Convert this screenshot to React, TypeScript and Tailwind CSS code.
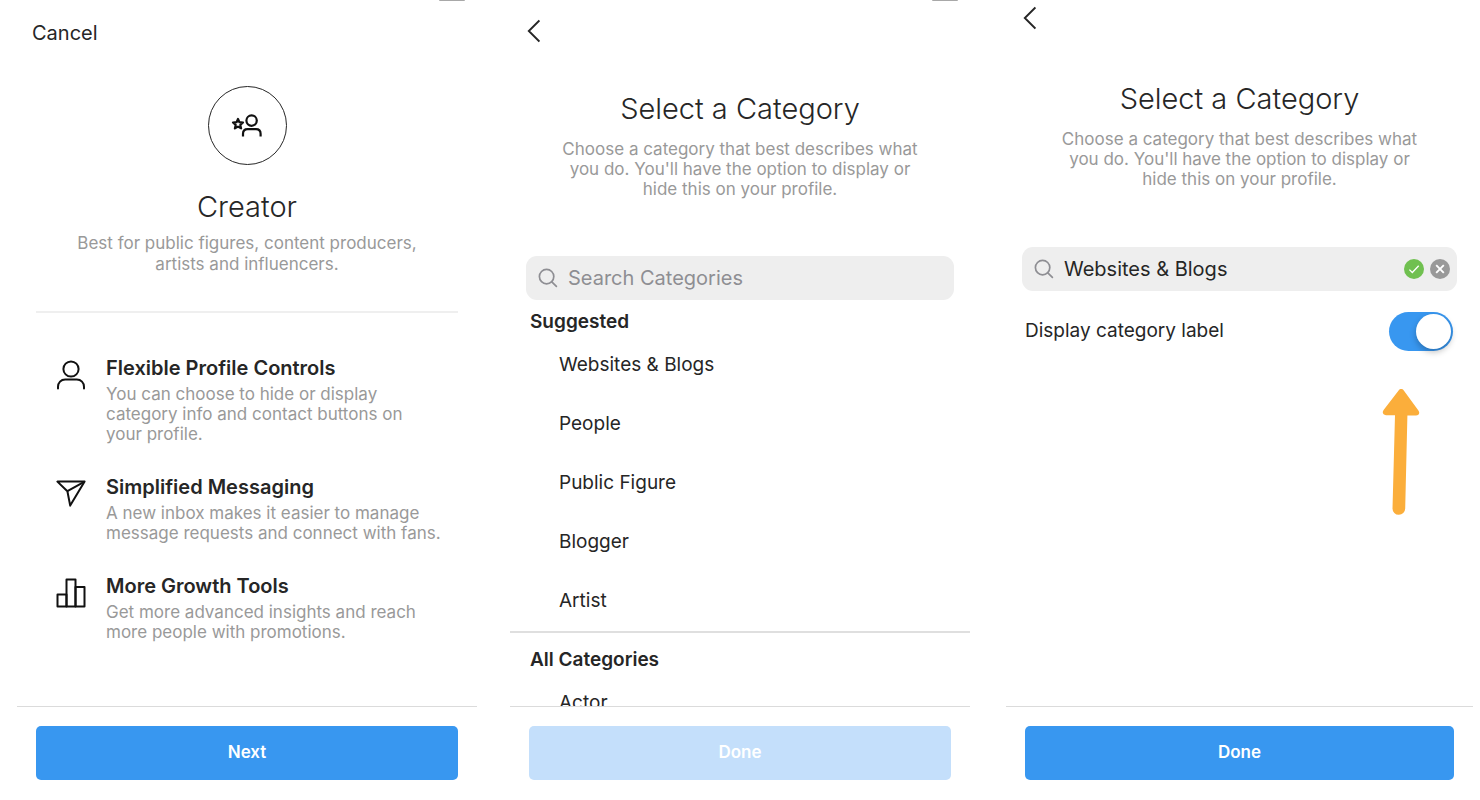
import { ReactNode, useState } from 'react';

const suggested = ['Websites & Blogs', 'People', 'Public Figure', 'Blogger', 'Artist'];
const allCategories = ['Actor'];

function UserIcon() {
  return (
    <svg width="30" height="30" viewBox="0 0 30 30" fill="none" stroke="#111" strokeWidth="2" strokeLinecap="round" aria-hidden="true">
      <circle cx="15" cy="9" r="7.6" />
      <path d="M2 28.6v-1.8C2 22.6 5 19.6 9.2 19.6h11.6c4.2 0 7.2 3 7.2 7.2v1.8" />
    </svg>
  );
}

function SendIcon() {
  return (
    <svg width="30" height="30" viewBox="0 0 30 30" fill="none" stroke="#111" strokeWidth="2" strokeLinejoin="round" aria-hidden="true">
      <path d="M1.4 2.6h27.2L14.2 26.6 11.4 12.2Z" />
      <path d="M11.4 12.2 28.6 2.6" />
    </svg>
  );
}

function ChartIcon() {
  return (
    <svg width="30" height="30" viewBox="0 0 30 30" fill="none" stroke="#111" strokeWidth="2" strokeLinejoin="round" aria-hidden="true">
      <path d="M1.5 16.4h9v12.1h-9z" />
      <path d="M10.5 1.5h9v27h-9z" />
      <path d="M19.5 9h9v19.5h-9z" />
    </svg>
  );
}

function CreatorIcon() {
  return (
    <svg width="32" height="24" viewBox="0 0 32 24" fill="none" stroke="#111" strokeWidth="2.2" aria-hidden="true">
      <path d="M7 5l1.4 3.2 3.6.3-2.7 2.4.8 3.5L7 12.6l-3.1 1.8.8-3.5L2 8.500l3.600-.3z" strokeLinejoin="round" />
      <circle cx="20.6" cy="6.6" r="5.2" />
      <path d="M12 22.4v-2.6c0-2.8 1.8-4.6 4.6-4.6H25c2.8 0 4.6 1.8 4.6 4.6v2.6" />
    </svg>
  );
}

function SearchIcon() {
  return (
    <svg width="20" height="20" viewBox="0 0 20 20" fill="none" stroke="#8e8e93" strokeWidth="1.7" strokeLinecap="round" className="shrink-0" aria-hidden="true">
      <circle cx="8.6" cy="8.6" r="7.2" />
      <path d="m13.8 13.8 4.6 4.6" />
    </svg>
  );
}

function BackButton() {
  return (
    <button type="button" aria-label="Go back" className="block">
      <svg width="14" height="24" viewBox="0 0 14 24" fill="none" stroke="#262626" strokeWidth="1.9" aria-hidden="true">
        <path d="M13.4 1.4 2.8 12l10.6 10.6" />
      </svg>
    </button>
  );
}

// Lower edge of the battery that peeks out of the status bar
function StatusBar() {
  return <div className="h-px w-[26px] mr-3 self-end shrink-0 rounded-b-sm bg-[#a8a8a8]" />;
}

function Footer({ label, disabled = false }: { label: string; disabled?: boolean }) {
  return (
    <footer className="shrink-0 border-t border-[#dbdbdb] px-[19px] pt-[19px] pb-5">
      <button
        type="button"
        disabled={disabled}
        className="w-full h-[54px] rounded-[5px] bg-[#3897f0] text-[17px] font-semibold text-white disabled:bg-[#c4dffb]">
        {label}
      </button>
    </footer>
  );
}

function CategoryIntro() {
  return (
    <div className="text-center">
      <h1 className="text-[29px] leading-10 font-light">Select a Category</h1>
      <p className="mt-[10px] mx-auto max-w-[376px] text-[17px] leading-5 text-[#999]">
        Choose a category that best describes what you do. You'll have the option to display or hide this on your profile.
      </p>
    </div>
  );
}

function Feature({ icon, title, children }: { icon: ReactNode; title: string; children: ReactNode }) {
  return (
    <li className="flex gap-5">
      <div className="w-[30px] shrink-0 pt-[6px]">{icon}</div>
      <div>
        <h2 className="text-xl leading-7 font-semibold">{title}</h2>
        <p className="mt-[2px] text-[17px] leading-5 text-[#999]">{children}</p>
      </div>
    </li>
  );
}

function CategoryList({ items }: { items: string[] }) {
  return (
    <ul className="pl-[49px]">
      {items.map((item) => (
        <li key={item}>
          <button type="button" className="w-full h-[59px] text-left text-[19px]">
            {item}
          </button>
        </li>
      ))}
    </ul>
  );
}

function CreatorScreen() {
  return (
    <section className="flex flex-col min-w-0 flex-[460]">
      <StatusBar />
      <div className="flex-1 px-[19px] pt-[18px]">
        <button type="button" className="block -ml-1 text-xl leading-7">
          Cancel
        </button>
        <div className="mt-[39px] mx-auto size-[79px] flex items-center justify-center rounded-full border border-[#262626]">
          <CreatorIcon />
        </div>
        <div className="mt-[22px] text-center">
          <h1 className="text-[29px] leading-10 font-light">Creator</h1>
          <p className="mt-[6px] mx-auto max-w-[376px] text-[17px] leading-[21px] text-[#999]">
            Best for public figures, content producers, artists and influencers.
          </p>
        </div>
        <hr className="mt-9 border-t-2 border-[#efefef]" />
        <ul className="mt-[41px] pl-5 pr-[17px] flex flex-col gap-[29px]">
          <Feature icon={<UserIcon />} title="Flexible Profile Controls">
            You can choose to hide or display category info and contact buttons on your profile.
          </Feature>
          <Feature icon={<SendIcon />} title="Simplified Messaging">
            A new inbox makes it easier to manage message requests and connect with fans.
          </Feature>
          <Feature icon={<ChartIcon />} title="More Growth Tools">
            Get more advanced insights and reach more people with promotions.
          </Feature>
        </ul>
      </div>
      <Footer label="Next" />
    </section>
  );
}

function CategoryListScreen() {
  return (
    <section className="flex flex-col min-w-0 flex-[460] ml-[33px]">
      <StatusBar />
      <div className="shrink-0 px-4 pt-[18px]">
        <BackButton />
        <div className="mt-[46px]">
          <CategoryIntro />
        </div>
        <label className="mt-[57px] h-11 px-3 flex items-center gap-[10px] rounded-[11px] bg-[#eee]">
          <SearchIcon />
          <input
            type="search"
            aria-label="Search Categories"
            placeholder="Search Categories"
            className="flex-1 min-w-0 bg-transparent text-xl outline-none placeholder:text-[#8e8e93]"
          />
        </label>
      </div>
      <div className="flex-1 min-h-0 mt-2 overflow-y-auto [scrollbar-width:none]">
        <h2 className="pl-5 text-[19px] leading-7 font-semibold">Suggested</h2>
        <CategoryList items={suggested} />
        <hr className="border-t-2 border-[#dfdfdf]" />
        <h2 className="mt-[13px] pl-5 text-[19px] leading-7 font-semibold">All Categories</h2>
        <CategoryList items={allCategories} />
      </div>
      <Footer label="Done" disabled />
    </section>
  );
}

function CategorySelectedScreen() {
  const [category, setCategory] = useState('Websites & Blogs');
  const [showLabel, setShowLabel] = useState(true);

  return (
    <section className="flex flex-col min-w-0 flex-[467] ml-9">
      <div className="flex-1 px-4 pt-[6px]">
        <BackButton />
        <div className="mt-[49px]">
          <CategoryIntro />
        </div>
        <div className="mt-[58px] h-11 pl-3 pr-[7px] flex items-center gap-[6px] rounded-[11px] bg-[#eee]">
          <label className="flex flex-1 min-w-0 items-center gap-[10px]">
            <SearchIcon />
            <input
              type="text"
              aria-label="Category"
              value={category}
              onChange={(e) => setCategory(e.target.value)}
              className="flex-1 min-w-0 bg-transparent text-xl outline-none"
            />
          </label>
          <svg width="20" height="20" viewBox="0 0 20 20" fill="none" aria-hidden="true">
            <circle cx="10" cy="10" r="10" fill="#70c050" />
            <path d="m5.4 10.6 2.9 2.9 6.4-6.8" stroke="#fff" strokeWidth="1.3" />
          </svg>
          <button type="button" aria-label="Clear" onClick={() => setCategory('')}>
            <svg width="20" height="20" viewBox="0 0 20 20" fill="none" className="block" aria-hidden="true">
              <circle cx="10" cy="10" r="10" fill="#999" />
              <path d="m6.2 6.2 7.6 7.6m0-7.6-7.6 7.6" stroke="#fff" strokeWidth="1.9" />
            </svg>
          </button>
        </div>
        <label className="mt-[21px] pl-[3px] pr-1 flex items-center justify-between text-[19px]">
          Display category label
          <input
            type="checkbox"
            role="switch"
            checked={showLabel}
            onChange={(e) => setShowLabel(e.target.checked)}
            className="peer sr-only"
          />
          <span className="flex h-[39px] w-16 items-center rounded-full bg-gray-300 p-[2px] peer-checked:justify-end peer-checked:bg-[#3897f0]">
            <span className="size-[35px] rounded-full bg-white shadow-[0_3px_6px_rgba(0,0,0,0.25)]" />
          </span>
        </label>
        <svg width="38" height="128" viewBox="0 0 38 128" className="mt-[37px] ml-auto mr-[37px]" aria-hidden="true">
          <path
            d="M16.6 2.4c1.4-1.9 3.8-1.9 5.2 0l14.6 20c1.8 2.5.6 5.2-2.4 5.2h-8.6l-2.2 93a6.3 6.3 0 0 1-12.7-.2l2.5-93.2H4c-3-.1-4.2-2.7-2.4-5.2z"
            fill="#fbae3b"
          />
        </svg>
      </div>
      <Footer label="Done" />
    </section>
  );
}

export default function App() {
  return (
    <main className="flex h-screen bg-white pl-[17px] pr-[7px] font-[Inter,sans-serif] text-[#262626]">
      <CreatorScreen />
      <CategoryListScreen />
      <CategorySelectedScreen />
    </main>
  );
}
